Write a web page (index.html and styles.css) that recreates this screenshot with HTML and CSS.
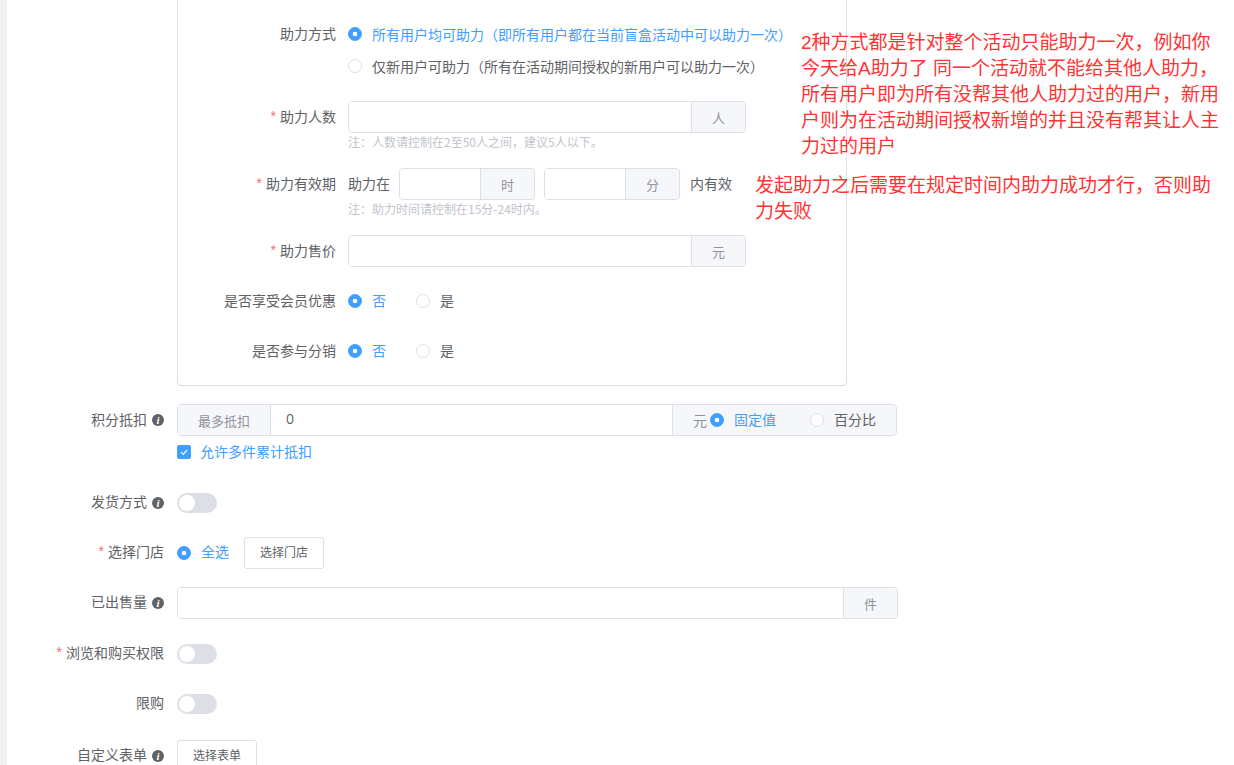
FILE: index.html
```html
<!DOCTYPE html>
<html lang="zh-CN">
<head>
<meta charset="utf-8">
<title>助力设置</title>
<link rel="stylesheet" href="styles.css">
</head>
<body>
<div class="page">
  <main class="form">
    <section class="box">
      <div class="row row-mode">
        <label class="lab in">助力方式</label>
        <div class="stack">
          <div class="radio on"><i class="dot"></i><span>所有用户均可助力（即所有用户都在当前盲盒活动中可以助力一次）</span></div>
          <div class="radio"><i class="dot"></i><span>仅新用户可助力（所有在活动期间授权的新用户可以助力一次）</span></div>
        </div>
      </div>
      <div class="row row-count">
        <label class="lab in"><b>*</b>助力人数</label>
        <div class="ctl">
          <div class="group w398"><div class="field"></div><div class="addon a54">人</div></div>
          <p class="hint">注：人数请控制在2至50人之间，建议5人以下。</p>
        </div>
      </div>
      <div class="row row-time">
        <label class="lab in"><b>*</b>助力有效期</label>
        <div class="ctl">
          <div class="line">
            <span class="txt t1">助力在</span>
            <div class="group w136"><div class="field"></div><div class="addon a54">时</div></div>
            <div class="group w136"><div class="field"></div><div class="addon a54">分</div></div>
            <span class="txt t2">内有效</span>
          </div>
          <p class="hint">注：助力时间请控制在15分-24时内。</p>
        </div>
      </div>
      <div class="row row-price">
        <label class="lab in"><b>*</b>助力售价</label>
        <div class="group w398"><div class="field"></div><div class="addon a54">元</div></div>
      </div>
      <div class="row row-vip">
        <label class="lab in">是否享受会员优惠</label>
        <div class="line gap30">
          <div class="radio on"><i class="dot"></i><span>否</span></div>
          <div class="radio"><i class="dot"></i><span>是</span></div>
        </div>
      </div>
      <div class="row row-dist">
        <label class="lab in">是否参与分销</label>
        <div class="line gap30">
          <div class="radio on"><i class="dot"></i><span>否</span></div>
          <div class="radio"><i class="dot"></i><span>是</span></div>
        </div>
      </div>
    </section>

    <div class="row row-points">
      <label class="lab">积分抵扣<i class="info">i</i></label>
      <div class="ctl">
        <div class="group w720">
          <div class="addon left a94">最多抵扣</div>
          <div class="field val">0</div>
          <div class="addon wide">
            <span class="unit">元</span>
            <div class="radio on"><i class="dot"></i><span>固定值</span></div>
            <div class="radio"><i class="dot"></i><span>百分比</span></div>
          </div>
        </div>
        <div class="check"><i class="box-check"><svg viewBox="0 0 14 14" width="14" height="14"><path d="M4 7.2 6.2 9.4 10.2 4.8" fill="none" stroke="#fff" stroke-width="1.2"/></svg></i><span>允许多件累计抵扣</span></div>
      </div>
    </div>

    <div class="row row-ship">
      <label class="lab">发货方式<i class="info">i</i></label>
      <i class="switch"></i>
    </div>

    <div class="row row-store">
      <label class="lab"><b>*</b>选择门店</label>
      <div class="line">
        <div class="radio on"><i class="dot"></i><span>全选</span></div>
        <button class="btn store-btn">选择门店</button>
      </div>
    </div>

    <div class="row row-sold">
      <label class="lab">已出售量<i class="info">i</i></label>
      <div class="group w721"><div class="field"></div><div class="addon a54">件</div></div>
    </div>

    <div class="row row-perm">
      <label class="lab"><b>*</b>浏览和购买权限</label>
      <i class="switch"></i>
    </div>

    <div class="row row-limit">
      <label class="lab">限购</label>
      <i class="switch"></i>
    </div>

    <div class="row row-form">
      <label class="lab">自定义表单<i class="info">i</i></label>
      <button class="btn">选择表单</button>
    </div>
  </main>
</div>
<p class="note note-a">2种方式都是针对整个活动只能助力一次，例如你今天给A助力了 同一个活动就不能给其他人助力，所有用户即为所有没帮其他人助力过的用户，新用户则为在活动期间授权新增的并且没有帮其让人主力过的用户</p>
<p class="note note-b">发起助力之后需要在规定时间内助力成功才行，否则助力失败</p>
</body>
</html>
```

FILE: styles.css
```css
* { box-sizing: border-box; }
html, body { margin: 0; height: 765px; overflow: hidden; background: #fff; }
body {
  font-family: "Noto Sans CJK SC", "Noto Sans", sans-serif;
  font-size: 14px;
  color: #606266;
  position: relative;
}
.page { border-left: 7px solid #f0f0f2; height: 765px; overflow: hidden; }
.form { display: flex; flex-direction: column; padding-left: 170px; position: relative; }

.box {
  width: 670px;
  height: 386px;
  border: 1px solid #dcdee2;
  border-top: 0;
  border-radius: 0 0 4px 4px;
  padding-top: 18px;
}

.row { display: flex; align-items: flex-start; }
.lab {
  flex: none;
  display: flex;
  justify-content: flex-end;
  align-items: center;
  width: 157px;
  margin-left: -170px;
  height: 32px;
  padding-bottom: 2px;
  color: #606266;
  white-space: nowrap;
  margin-right: 13px;
}
.lab.in { margin-left: 0; width: 158px; margin-right: 12px; }
.lab b { color: #f56c6c; font-weight: 400; margin-right: 4px; font-family: "Liberation Sans", sans-serif; }
.info {
  flex: none;
  width: 12px; height: 12px;
  border-radius: 50%;
  background: #606266;
  color: #fff;
  font: italic 700 11px/12px "Liberation Serif", serif;
  text-align: center;
  margin-left: 5px;
  margin-top: 2px;
}
.row-points ~ .row .lab { padding-bottom: 4px; }
.row-points ~ .row .info { margin-top: 4px; }

.stack { display: flex; flex-direction: column; }
.ctl { display: flex; flex-direction: column; }
.line { display: flex; align-items: center; height: 32px; }
.gap30 { gap: 30px; }

.radio { display: flex; align-items: center; height: 32px; white-space: nowrap; color: #606266; }
.radio span { margin-top: -2px; }
.row-mode .radio span { margin-top: 0; }
.row-store .radio span { margin-top: -4px; }
.radio .dot {
  flex: none;
  width: 14px; height: 14px;
  border: 1px solid #dcdfe6;
  border-radius: 50%;
  background: #fff;
  margin-right: 10px;
}
.radio.on { color: #409eff; }
.radio.on .dot {
  border-color: #409eff;
  background: radial-gradient(circle, #fff 0 2px, #409eff 2.6px);
}

.group { display: flex; height: 32px; border: 1px solid #dcdfe6; border-radius: 4px; overflow: hidden; }
.w398 { width: 398px; }
.w136 { width: 136px; }
.w720 { width: 720px; }
.w721 { width: 721px; }
.field { flex: 1; min-width: 0; background: #fff; }
.field.val { padding-left: 15px; font-size: 14px; line-height: 28px; font-family: "Open Sans", sans-serif; }
.addon {
  flex: none;
  background: #f5f7fa;
  border-left: 1px solid #dcdfe6;
  color: #909399;
  text-align: center;
  font-size: 13px;
  line-height: 32px;
}
.a54 { width: 54px; }
.a94 { width: 93px; }
.addon.left { border-left: 0; border-right: 1px solid #dcdfe6; }
.addon.wide { width: 224px; display: flex; align-items: center; padding-left: 20px; font-size: 14px; }
.unit { margin-right: 3px; }
.wide .radio { width: 100px; height: 30px; }
.wide .radio + .radio { width: auto; }

.hint { margin: 0; height: 18px; font-size: 12px; line-height: 17px; color: #c0c4cc; }

.txt { flex: none; margin-top: -2px; }
.t1 { width: 51px; }
.t2 { margin-left: 10px; }
.line .group + .group { margin-left: 9px; }

.check { display: flex; align-items: center; height: 32px; color: #409eff; }
.check span { margin-top: -2px; }
.box-check { width: 14px; height: 14px; border-radius: 2px; background: #409eff; margin-right: 9px; display: flex; }

.switch { display: block; width: 40px; height: 20px; border-radius: 10px; background: #dcdfe6; position: relative; margin-top: 6px; }
.switch::after { content: ""; position: absolute; left: 2px; top: 2px; width: 16px; height: 16px; border-radius: 50%; background: #fff; }

.btn {
  width: 80px;
  height: 32px;
  padding: 0 0 4px;
  background: #fff;
  border: 1px solid #dcdfe6;
  border-radius: 3px;
  font-family: inherit;
  font-size: 12px;
  color: #606266;
}
.store-btn { margin-left: 15px; }

.row-mode { height: 83px; }
.row-count { height: 67px; }
.row-time { height: 67px; }
.row-price { height: 50px; }
.row-vip { height: 50px; }
.row-dist { height: 32px; }

.row-points { margin-top: 18px; height: 83px; }
.row-ship { height: 50px; }
.row-store { height: 50px; }
.row-sold { height: 51px; }
.row-perm { height: 50px; }
.row-limit { height: 52px; }

.note {
  position: absolute;
  margin: 0;
  color: #ff3333;
  font-family: "Liberation Sans", "Noto Sans CJK SC", sans-serif;
  font-size: 19px;
  line-height: 26px;
}
.note-a { left: 801px; top: 30px; width: 422px; }
.note-b { left: 755px; top: 173px; width: 460px; }
```
